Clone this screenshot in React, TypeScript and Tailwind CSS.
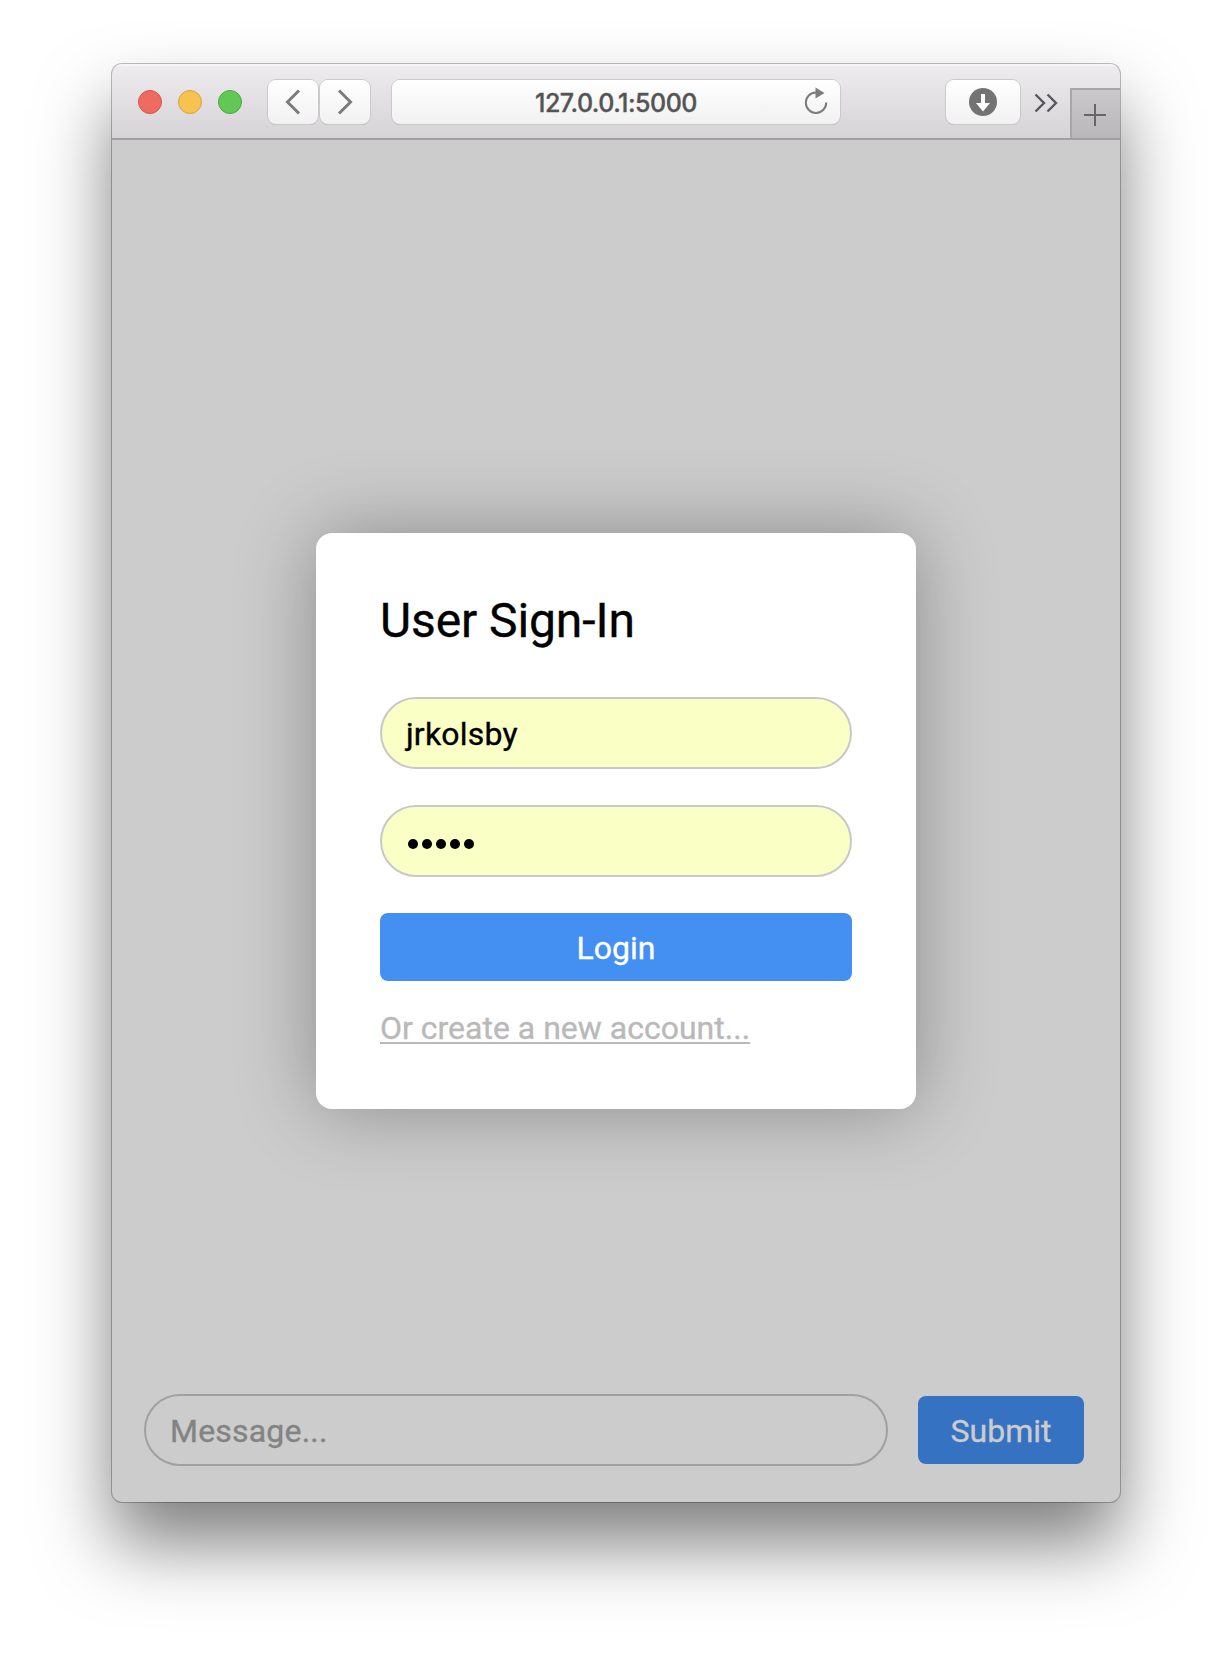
import React from "react";

const toolButton =
  "flex items-center justify-center rounded-[8px] bg-gradient-to-b from-white to-[#f1f1f1] shadow-[0_0_0_1px_#cbc9cc,0_1px_0_0_#a9a7aa]";

const field = "flex h-[72px] items-center rounded-full border-2 text-[32px] tracking-[0.2px]";

function TitleBar() {
  return (
    <header className="flex h-[76px] shrink-0 border-b-2 border-[#a29ea3] bg-gradient-to-b from-[#eeecef] to-[#d6d3d7] shadow-[inset_0_2px_0_#f7f6f7]">
      <div className="flex gap-4 pl-[26px] pt-[26px]">
        <span className="size-6 rounded-full border border-[#d5544b] bg-[#ee6b60]" />
        <span className="size-6 rounded-full border border-[#d8a140] bg-[#f6c350]" />
        <span className="size-6 rounded-full border border-[#4aa73c] bg-[#62c855]" />
      </div>
      <div className="ml-[26px] mt-4 flex gap-[2px]">
        <button className={`${toolButton} h-11 w-[50px]`}>
          <svg className="size-[50px]" viewBox="0 0 50 44" fill="none" stroke="#7b7b7b" strokeWidth="3">
            <path d="M31 10.500 19.500 22 31 33.500" />
          </svg>
        </button>
        <button className={`${toolButton} h-11 w-[50px]`}>
          <svg className="size-[50px]" viewBox="0 0 50 44" fill="none" stroke="#7b7b7b" strokeWidth="3">
            <path d="M19 10.500 30.500 22 19 33.500" />
          </svg>
        </button>
      </div>
      <div className={`${toolButton} relative ml-[22px] mt-4 h-11 w-[448px] font-['Inter'] text-[25px] font-medium tracking-[-0.5px] text-[#545454]`}>
        <span className="pt-[4px]">127.0.0.1:5000</span>
        <svg className="absolute right-2 top-[6px] h-8 w-8" viewBox="0 0 32 32" fill="none">
          <path d="M16 6.5A10.2 10.2 0 1 0 26.2 16.5" stroke="#7b7b7b" strokeWidth="2" />
          <path d="M15.500 1.500 24.500 7 15.500 12.500Z" fill="#7b7b7b" />
        </svg>
      </div>
      <button className={`${toolButton} ml-[106px] mt-4 h-11 w-[74px]`}>
        <svg className="size-7" viewBox="0 0 28 28">
          <circle cx="14" cy="14" r="14" fill="#737373" />
          <path d="M12 6h4v9h5l-7 8.500-7-8.500h5Z" fill="#fff" />
        </svg>
      </button>
      <svg className="ml-[14px] mt-[29px] h-[20px] w-6" viewBox="0 0 24 20" fill="none" stroke="#58565a" strokeWidth="2.400">
        <path d="M1.500 1.500 10 10 1.500 18.500M13.500 1.500 22 10 13.500 18.500" />
      </svg>
      <button className="ml-auto mt-6 flex w-[50px] items-center justify-center border-l-2 border-t-2 border-[#a9a6aa] bg-gradient-to-b from-[#cbc8cb] to-[#bab7bb] pr-[2px] pt-[2px]">
        <svg className="size-[22px]" viewBox="0 0 22 22" stroke="#676568" strokeWidth="2">
          <path d="M11 0V22M0 11H22" />
        </svg>
      </button>
    </header>
  );
}

function SignIn() {
  return (
    <section className="mt-[393px] h-[576px] w-[600px] self-center rounded-[16px] bg-white px-16 pt-[56px] shadow-[0_0_80px_rgba(0,0,0,0.32)]">
      <h1 className="h-[108px] text-[48px] leading-[64px] tracking-[-0.1px] text-black">User Sign-In</h1>
      <div className={`${field} border-[#c8c8c8] bg-[#faffc5] pl-6 pt-px text-black`}>jrkolsby</div>
      <div className={`${field} mt-9 gap-1 border-[#c8c8c8] bg-[#faffc5] pl-[26px] pt-[6px]`}>
        {[0, 1, 2, 3, 4].map((i) => (
          <span key={i} className="size-[10px] rounded-full bg-black" />
        ))}
      </div>
      <button className="mt-9 h-[68px] w-full rounded-[8px] bg-[#448ff2] pt-[2px] text-[32px] text-white">Login</button>
      <a className="mt-[28px] block text-[32px] leading-[38px] text-[#b9b9b9] underline decoration-2 underline-offset-[3px]">
        Or create a new account...
      </a>
    </section>
  );
}

export default function App() {
  return (
    <div className="flex h-[1662px] w-[1232px] justify-center overflow-hidden bg-white pt-16 font-['Roboto',sans-serif] [-webkit-text-stroke:0.35px]">
      <main className="flex h-[1438px] w-[1008px] flex-col overflow-hidden rounded-[10px] bg-[#cccccc] shadow-[0_0_0_1px_rgba(0,0,0,0.25),0_42px_72px_rgba(0,0,0,0.5)]">
        <TitleBar />
        <SignIn />
        <form className="mt-auto flex items-center px-8 pb-9">
          <div className={`${field} w-[744px] border-[#a0a0a0] pl-6 pt-px text-[#838383]`}>Message...</div>
          <button className="ml-[30px] h-[68px] w-[166px] rounded-[8px] bg-[#3672c2] pt-px text-[32px] text-[#cccccc]">
            Submit
          </button>
        </form>
      </main>
    </div>
  );
}
